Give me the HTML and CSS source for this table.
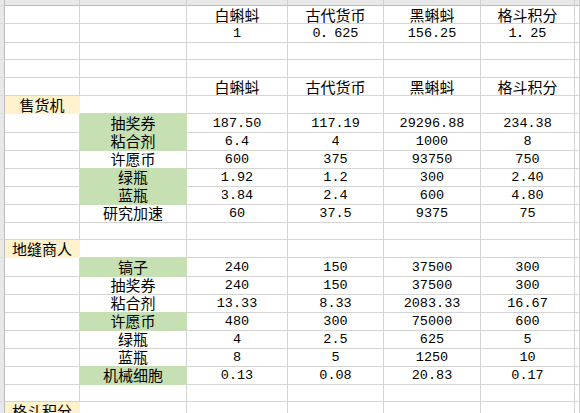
FILE: index.html
```html
<!DOCTYPE html>
<html lang="zh-CN">
<head>
<meta charset="utf-8">
<title>Sheet</title>
<link rel="stylesheet" href="styles.css">
</head>
<body>
<div class="sheet">
  <div class="row hdr"><div class="rh"></div><div class="ch"></div><div class="ch"></div><div class="ch"></div><div class="ch"></div><div class="ch"></div><div class="ch"></div><div class="ch"></div></div>

  <div class="row"><div class="rh"></div><div class="c"></div><div class="c"></div><div class="c">白蝌蚪</div><div class="c">古代货币</div><div class="c">黑蝌蚪</div><div class="c">格斗积分</div><div class="c"></div></div>
  <div class="row"><div class="rh"></div><div class="c"></div><div class="c"></div><div class="c n">1</div><div class="c n">0．625</div><div class="c n">156.25</div><div class="c n">1．25</div><div class="c"></div></div>
  <div class="row"><div class="rh"></div><div class="c"></div><div class="c"></div><div class="c"></div><div class="c"></div><div class="c"></div><div class="c"></div><div class="c"></div></div>
  <div class="row"><div class="rh"></div><div class="c"></div><div class="c"></div><div class="c"></div><div class="c"></div><div class="c"></div><div class="c"></div><div class="c"></div></div>
  <div class="row"><div class="rh"></div><div class="c"></div><div class="c"></div><div class="c">白蝌蚪</div><div class="c">古代货币</div><div class="c">黑蝌蚪</div><div class="c">格斗积分</div><div class="c"></div></div>

  <div class="row"><div class="rh"></div><div class="c o">售货机</div><div class="c"></div><div class="c"></div><div class="c"></div><div class="c"></div><div class="c"></div><div class="c"></div></div>
  <div class="row"><div class="rh"></div><div class="c"></div><div class="c g">抽奖券</div><div class="c n">187.50</div><div class="c n">117.19</div><div class="c n">29296.88</div><div class="c n">234.38</div><div class="c"></div></div>
  <div class="row"><div class="rh"></div><div class="c"></div><div class="c g">粘合剂</div><div class="c n">6.4</div><div class="c n">4</div><div class="c n">1000</div><div class="c n">8</div><div class="c"></div></div>
  <div class="row"><div class="rh"></div><div class="c"></div><div class="c">许愿币</div><div class="c n">600</div><div class="c n">375</div><div class="c n">93750</div><div class="c n">750</div><div class="c"></div></div>
  <div class="row"><div class="rh"></div><div class="c"></div><div class="c g">绿瓶</div><div class="c n">1.92</div><div class="c n">1.2</div><div class="c n">300</div><div class="c n">2.40</div><div class="c"></div></div>
  <div class="row"><div class="rh"></div><div class="c"></div><div class="c g">蓝瓶</div><div class="c n">3.84</div><div class="c n">2.4</div><div class="c n">600</div><div class="c n">4.80</div><div class="c"></div></div>
  <div class="row"><div class="rh"></div><div class="c"></div><div class="c">研究加速</div><div class="c n">60</div><div class="c n">37.5</div><div class="c n">9375</div><div class="c n">75</div><div class="c"></div></div>
  <div class="row"><div class="rh"></div><div class="c"></div><div class="c"></div><div class="c"></div><div class="c"></div><div class="c"></div><div class="c"></div><div class="c"></div></div>

  <div class="row"><div class="rh"></div><div class="c o">地缝商人</div><div class="c"></div><div class="c"></div><div class="c"></div><div class="c"></div><div class="c"></div><div class="c"></div></div>
  <div class="row"><div class="rh"></div><div class="c"></div><div class="c g">镐子</div><div class="c n">240</div><div class="c n">150</div><div class="c n">37500</div><div class="c n">300</div><div class="c"></div></div>
  <div class="row"><div class="rh"></div><div class="c"></div><div class="c">抽奖券</div><div class="c n">240</div><div class="c n">150</div><div class="c n">37500</div><div class="c n">300</div><div class="c"></div></div>
  <div class="row"><div class="rh"></div><div class="c"></div><div class="c">粘合剂</div><div class="c n">13.33</div><div class="c n">8.33</div><div class="c n">2083.33</div><div class="c n">16.67</div><div class="c"></div></div>
  <div class="row"><div class="rh"></div><div class="c"></div><div class="c g">许愿币</div><div class="c n">480</div><div class="c n">300</div><div class="c n">75000</div><div class="c n">600</div><div class="c"></div></div>
  <div class="row"><div class="rh"></div><div class="c"></div><div class="c">绿瓶</div><div class="c n">4</div><div class="c n">2.5</div><div class="c n">625</div><div class="c n">5</div><div class="c"></div></div>
  <div class="row"><div class="rh"></div><div class="c"></div><div class="c">蓝瓶</div><div class="c n">8</div><div class="c n">5</div><div class="c n">1250</div><div class="c n">10</div><div class="c"></div></div>
  <div class="row"><div class="rh"></div><div class="c"></div><div class="c g">机械细胞</div><div class="c n">0.13</div><div class="c n">0.08</div><div class="c n">20.83</div><div class="c n">0.17</div><div class="c"></div></div>
  <div class="row"><div class="rh"></div><div class="c"></div><div class="c"></div><div class="c"></div><div class="c"></div><div class="c"></div><div class="c"></div><div class="c"></div></div>

  <div class="row"><div class="rh"></div><div class="c o">格斗积分</div><div class="c"></div><div class="c"></div><div class="c"></div><div class="c"></div><div class="c"></div><div class="c"></div></div>
</div>
</body>
</html>
```

FILE: styles.css
```css
html, body {
  margin: 0;
  padding: 0;
  background: #ffffff;
}

body {
  font-family: "Noto Sans CJK SC", "Noto Sans", sans-serif;
  font-size: 15px;
  color: #000000;
  overflow: hidden;
}

.sheet {
  width: 580px;
  height: 413px;
  overflow: hidden;
}

.row {
  display: grid;
  grid-template-columns: 5px 75px 107px 101px 96px 97px 94px 1fr;
  height: 18px;
}

.row.hdr {
  height: 6px;
}

.row > div {
  box-sizing: border-box;
  border-right: 1px solid #d4d4d4;
  border-bottom: 1px solid #d4d4d4;
  white-space: nowrap;
  text-align: center;
  line-height: 17px;
}

.rh {
  background: #e8e8e8;
}

.row > .rh {
  border-right-color: #bcbcbc;
  border-bottom-color: #dcdcdc;
}

.ch {
  background: #e8e8e8;
}

.row > .ch {
  border-bottom-color: #bcbcbc;
  border-right-color: #cfcfcf;
}

.c {
  font-size: 15px;
}

.n {
  font-family: "Liberation Mono", "Noto Sans CJK SC", monospace;
  font-size: 13.5px;
  line-height: 16px;
  padding-top: 1px;
}

.row > .g {
  background: #c6e0b4;
  border-color: #c6e0b4;
}

.row > .o {
  background: #fff2cc;
  border-color: #fff2cc;
}
```
